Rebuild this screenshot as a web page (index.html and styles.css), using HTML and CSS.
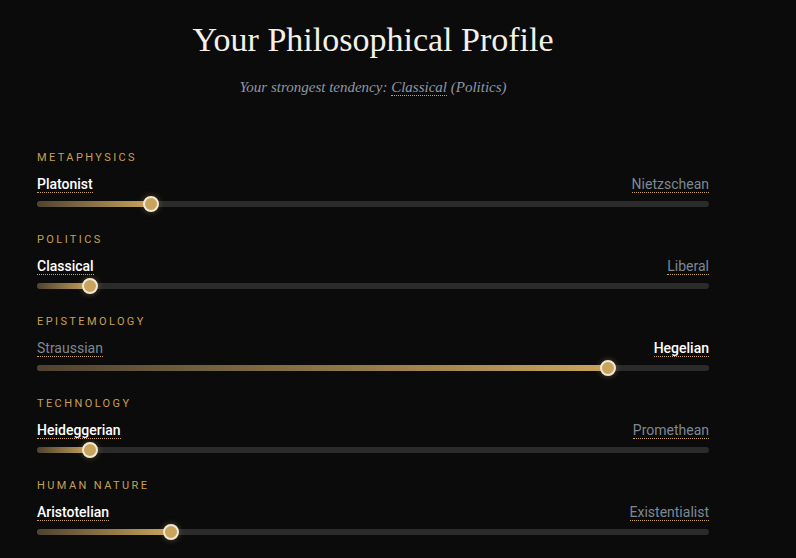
FILE: index.html
```
<!DOCTYPE html>
<html lang="en">
<head>
    <meta charset="UTF-8">
    <meta name="viewport" content="width=device-width, initial-scale=1.0">
    <title>Your Philosophical Profile</title>
    <link rel="stylesheet" href="styles.css">
</head>
<body>
    <div class="profile">
        <h1>Your Philosophical Profile</h1>
        <p class="tendency">Your strongest tendency: <span class="term">Classical</span> (Politics)</p>

        <!-- Axes -->
        <div class="axis">
            <div class="axis-name">Metaphysics</div>
            <div class="poles">
                <span class="pole active">Platonist</span>
                <span class="pole">Nietzschean</span>
            </div>
            <div class="track">
                <div class="fill" style="width: 17%"></div>
                <div class="thumb" style="left: 17%"></div>
            </div>
        </div>

        <div class="axis">
            <div class="axis-name">Politics</div>
            <div class="poles">
                <span class="pole active">Classical</span>
                <span class="pole">Liberal</span>
            </div>
            <div class="track">
                <div class="fill" style="width: 7.9%"></div>
                <div class="thumb" style="left: 7.9%"></div>
            </div>
        </div>

        <div class="axis">
            <div class="axis-name">Epistemology</div>
            <div class="poles">
                <span class="pole">Straussian</span>
                <span class="pole active">Hegelian</span>
            </div>
            <div class="track">
                <div class="fill" style="width: 85%"></div>
                <div class="thumb" style="left: 85%"></div>
            </div>
        </div>

        <div class="axis">
            <div class="axis-name">Technology</div>
            <div class="poles">
                <span class="pole active">Heideggerian</span>
                <span class="pole">Promethean</span>
            </div>
            <div class="track">
                <div class="fill" style="width: 7.9%"></div>
                <div class="thumb" style="left: 7.9%"></div>
            </div>
        </div>

        <div class="axis">
            <div class="axis-name">Human Nature</div>
            <div class="poles">
                <span class="pole active">Aristotelian</span>
                <span class="pole">Existentialist</span>
            </div>
            <div class="track">
                <div class="fill" style="width: 19.9%"></div>
                <div class="thumb" style="left: 19.9%"></div>
            </div>
        </div>
    </div>
</body>
</html>
```

FILE: styles.css
```
body {
    margin: 0;
    background-color: #0b0b0b;
    color: #ffffff;
    font-family: Roboto, "Liberation Sans", sans-serif;
}

.profile {
    width: 672px;
    padding: 19px 37px 0 37px;
}

h1 {
    margin: 0;
    text-align: center;
    font-family: "Liberation Serif", serif;
    font-weight: normal;
    font-size: 34px;
    line-height: 42px;
    color: #f4f1ea;
}

.tendency {
    margin: 18px 0 55px 0;
    text-align: center;
    font-family: "Liberation Serif", serif;
    font-style: italic;
    font-size: 15px;
    color: #8d98a6;
}

.term {
    border-bottom: 1px dotted #c9a45c;
}

/* one row per axis */
.axis {
    margin-bottom: 26px;
}

.axis-name {
    font-size: 11px;
    letter-spacing: 2.4px;
    text-transform: uppercase;
    color: #c8a052;
    line-height: 14px;
}

.poles {
    display: flex;
    justify-content: space-between;
    margin-top: 11px;
    font-size: 14px;
    line-height: 16px;
}

.pole {
    color: #7d8894;
    border-bottom: 1px dotted #c9a45c;
}

.pole.active {
    color: #ffffff;
    font-weight: 500;
}

.track {
    position: relative;
    height: 6px;
    margin-top: 8px;
    border-radius: 3px;
    background-color: #2b2b2b;
}

.fill {
    height: 100%;
    border-radius: 3px;
    background: linear-gradient(to right, #4e4330, #c9a45c);
}

.thumb {
    position: absolute;
    top: 50%;
    width: 12px;
    height: 12px;
    margin: -8px 0 0 -8px;
    border: 2px solid #f1e9d8;
    border-radius: 50%;
    background-color: #c9a45c;
    box-shadow: 0 0 6px rgba(201, 164, 92, 0.4);
}
```
